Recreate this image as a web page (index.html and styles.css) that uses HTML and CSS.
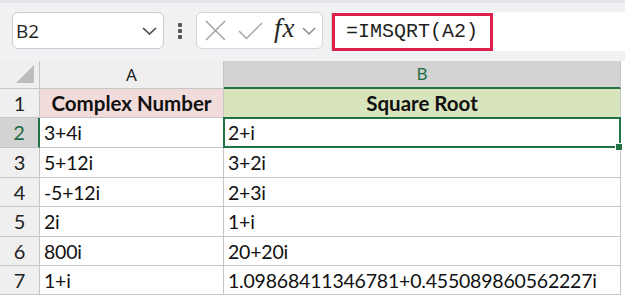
FILE: index.html
```html
<!DOCTYPE html>
<html lang="en">

<head>
    <meta charset="UTF-8">
    <meta name="viewport" content="width=device-width, initial-scale=1.0">
    <title>IMSQRT</title>
    <link rel="stylesheet" href="styles.css">
</head>

<body>
    <div class="toolbar">
        <div class="namebox">
            <span>B2</span>
            <svg class="chev" width="15" height="8" viewBox="0 0 15 8"><path d="M1 1 L7.5 7 L14 1" fill="none" stroke="#444" stroke-width="1.6"/></svg>
        </div>
        <div class="grip"><i></i><i></i><i></i></div>
        <div class="fnbox">
            <svg width="21" height="21" viewBox="0 0 21 21"><path d="M1 1 L20 20 M20 1 L1 20" stroke="#a3a3a3" stroke-width="1.5"/></svg>
            <svg class="ok" width="25" height="18" viewBox="0 0 25 18"><path d="M1 9 L8.5 16.5 L24 1" fill="none" stroke="#a8a8a8" stroke-width="1.5"/></svg>
            <span class="fx">fx</span>
            <svg class="chev2" width="14" height="8" viewBox="0 0 14 8"><path d="M1 1 L7 7 L13 1" fill="none" stroke="#8a8a8a" stroke-width="1.5"/></svg>
        </div>
        <div class="formula">
            <span class="hl">=IMSQRT(A2)</span>
        </div>
    </div>

    <div class="sheet">
        <div class="corner"></div>
        <div class="colhead">A</div>
        <div class="colhead sel">B</div>

        <div class="rowhead">1</div>
        <div class="cell title pink">Complex Number</div>
        <div class="cell title green">Square Root</div>

        <div class="rowhead sel">2</div>
        <div class="cell">3+4i</div>
        <div class="cell active">2+i</div>

        <div class="rowhead">3</div>
        <div class="cell">5+12i</div>
        <div class="cell">3+2i</div>

        <div class="rowhead">4</div>
        <div class="cell">-5+12i</div>
        <div class="cell">2+3i</div>

        <div class="rowhead">5</div>
        <div class="cell">2i</div>
        <div class="cell">1+i</div>

        <div class="rowhead">6</div>
        <div class="cell">800i</div>
        <div class="cell">20+20i</div>

        <div class="rowhead">7</div>
        <div class="cell">1+i</div>
        <div class="cell">1.09868411346781+0.455089860562227i</div>
    </div>
</body>

</html>
```

FILE: styles.css
```css
body {
    margin: 0;
    padding: 0;
    background: #ffffff;
    font-family: "Open Sans", sans-serif;
    color: #1a1a1a;
}

/* formula bar strip */
.toolbar {
    height: 61px;
    box-sizing: border-box;
    background: #eff1f3;
    border-top: 3px solid #e2e4e7;
    padding-top: 9px;
    display: flex;
    align-items: flex-start;
}

.namebox {
    margin-left: 12px;
    width: 152px;
    height: 37px;
    box-sizing: border-box;
    background: #fff;
    border: 1px solid #cbcdd0;
    border-radius: 6px;
    display: flex;
    align-items: center;
    justify-content: space-between;
    padding: 0 6px 0 3px;
    font-size: 19px;
    color: #1f1f1f;
}

.grip {
    width: 32px;
    height: 37px;
    display: flex;
    flex-direction: column;
    align-items: center;
    justify-content: center;
    gap: 2px;
}

.grip i {
    width: 4px;
    height: 4px;
    background: #555;
    border-radius: 1px;
}

.fnbox {
    width: 127px;
    height: 37px;
    box-sizing: border-box;
    background: #fff;
    border: 1px solid #d3d5d8;
    border-radius: 6px;
    display: flex;
    align-items: center;
    padding-left: 8px;
}

.fnbox .ok {
    margin-left: 12px;
}

.fx {
    font-family: "Liberation Serif", serif;
    font-style: italic;
    font-size: 27px;
    color: #262626;
    margin-left: 11px;
    line-height: 1;
    margin-top: -4px;
    letter-spacing: 1px;
}

.chev2 {
    margin-left: 6px;
}

.formula {
    flex: 1;
    margin-left: 8px;
    height: 39px;
    background: #fff;
    border-left: 1px solid #d6d6d6;
    display: flex;
    align-items: flex-start;
}

.hl {
    margin-left: 0;
    margin-top: 1px;
    width: 161px;
    height: 38px;
    box-sizing: border-box;
    border: 3px solid #df1f4c;
    font-family: "Liberation Mono", monospace;
    font-size: 20px;
    line-height: 32px;
    padding-left: 11px;
    color: #1f1f1f;
}

/* worksheet */
.sheet {
    display: grid;
    grid-template-columns: 40px 184px 397px;
    grid-template-rows: 28px 29px 30px 30px 29px 30px 29px 29px;
    background: #fff;
}

.corner,
.colhead,
.rowhead {
    background: #efefef;
    box-sizing: border-box;
    border-right: 1px solid #c6c6c6;
    border-bottom: 1px solid #c6c6c6;
}

.corner {
    position: relative;
}

.corner::after {
    content: "";
    position: absolute;
    right: 5px;
    bottom: 5px;
    border-left: 18px solid transparent;
    border-bottom: 18px solid #bdbdbd;
}

.colhead {
    font-family: "Noto Sans", sans-serif;
    font-size: 17px;
    text-align: center;
    line-height: 27px;
    color: #222;
}

.colhead.sel {
    background: #d3d3d3;
    color: #1e6b41;
    border-bottom: 2px solid #217346;
    line-height: 26px;
}

.rowhead {
    font-family: "Lato", sans-serif;
    font-size: 20px;
    text-align: center;
    line-height: 29px;
    color: #222;
}

.rowhead.sel {
    background: #d3d3d3;
    color: #1e6b41;
    border-right: 2px solid #217346;
}

.cell {
    box-sizing: border-box;
    border-right: 1px solid #c6c6c6;
    border-bottom: 1px solid #c6c6c6;
    font-family: "Lato", sans-serif;
    font-size: 19.5px;
    letter-spacing: -0.2px;
    line-height: 29px;
    padding-left: 4px;
    white-space: nowrap;
    color: #111;
}

.cell.title {
    font-weight: bold;
    font-size: 20.5px;
    letter-spacing: 0;
    text-align: center;
    padding-left: 0;
}

.pink {
    background: #f2dcdb;
}

.green {
    background: #d8e4bc;
}

.active {
    position: relative;
}

.active::before {
    content: "";
    position: absolute;
    left: -1px;
    top: -1px;
    right: -1px;
    bottom: -1px;
    border: 2px solid #217346;
}

.active::after {
    content: "";
    position: absolute;
    right: -3px;
    bottom: -4px;
    width: 6px;
    height: 6px;
    background: #217346;
    border: 1px solid #fff;
}
```
